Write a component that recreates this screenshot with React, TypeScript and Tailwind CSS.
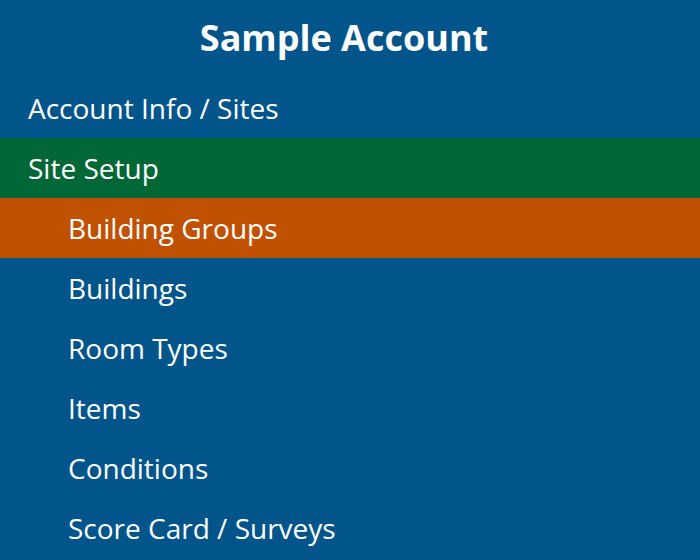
import React from "react";

const sub = ["Buildings", "Room Types", "Items", "Conditions", "Score Card / Surveys"];

export default function App() {
  return (
    <div className="w-[700px] h-[560px] bg-[#02558b] text-white overflow-hidden" style={{ fontFamily: '"Open Sans", sans-serif' }}>
      <div className="h-[78px] flex items-center justify-center text-[36px] font-bold pb-[2px] pr-[12px]">Sample Account</div>
      <div className="h-[60px] flex items-center pl-[28px] text-[28px]">Account Info / Sites</div>
      <div className="h-[60px] flex items-center pl-[28px] text-[28px] bg-[#026736]">Site Setup</div>
      <div className="h-[60px] flex items-center pl-[68px] text-[28px] bg-[#c05100]">Building Groups</div>
      {sub.map((s) => (
        <div key={s} className="h-[60px] flex items-center pl-[68px] text-[28px]">{s}</div>
      ))}
    </div>
  );
}
